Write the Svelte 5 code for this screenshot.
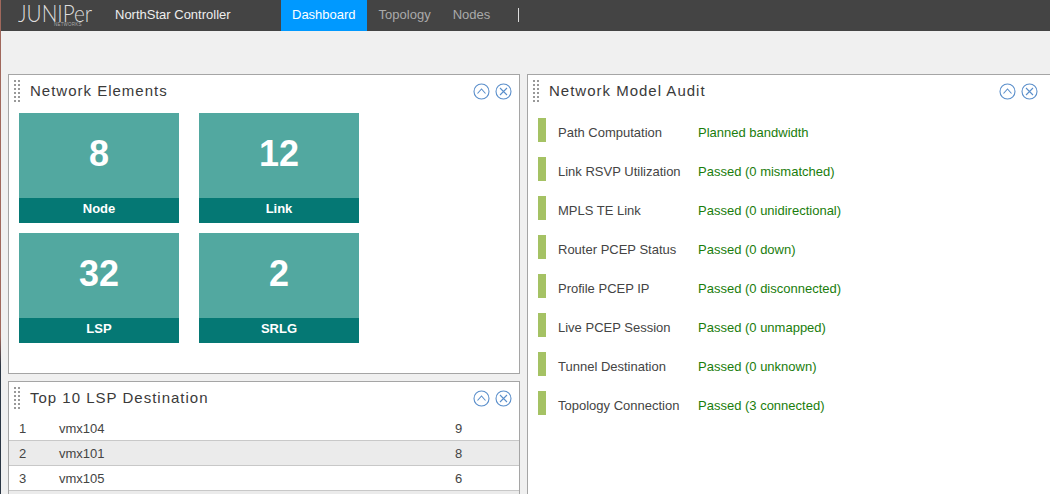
<script>
  const tiles = [
    { n: '8', label: 'Node' },
    { n: '12', label: 'Link' },
    { n: '32', label: 'LSP' },
    { n: '2', label: 'SRLG' }
  ];
  const audit = [
    ['Path Computation', 'Planned bandwidth'],
    ['Link RSVP Utilization', 'Passed (0 mismatched)'],
    ['MPLS TE Link', 'Passed (0 unidirectional)'],
    ['Router PCEP Status', 'Passed (0 down)'],
    ['Profile PCEP IP', 'Passed (0 disconnected)'],
    ['Live PCEP Session', 'Passed (0 unmapped)'],
    ['Tunnel Destination', 'Passed (0 unknown)'],
    ['Topology Connection', 'Passed (3 connected)']
  ];
  const rows = [
    ['1', 'vmx104', '9'],
    ['2', 'vmx101', '8'],
    ['3', 'vmx105', '6'],
    ['', '', '']
  ];
</script>

{#snippet head(title)}
  <div class="phead">
    <span class="grip">{#each Array(12) as _}<i></i>{/each}</span>
    <span class="ptitle">{title}</span>
    <span class="picons">
      <svg width="17" height="17" viewBox="0 0 17 17"><circle cx="8.5" cy="8.5" r="7.5" /><path d="M4.5 10.5 L8.5 6 L12.5 10.5" /></svg>
      <svg width="17" height="17" viewBox="0 0 17 17"><circle cx="8.5" cy="8.5" r="7.5" /><path d="M5 5 L12 12 M12 5 L5 12" /></svg>
    </span>
  </div>
{/snippet}

<div class="page">
  <header>
    <div class="logo"><span class="word">JUNIPer</span><span class="sub">NETWORKS</span></div>
    <div class="product">NorthStar Controller</div>
    <nav>
      <span class="tab active">Dashboard</span>
      <span class="tab">Topology</span>
      <span class="tab">Nodes</span>
      <span class="sep"></span>
    </nav>
  </header>
  <main>
    <div class="col">
      <section class="panel elements">
        {@render head('Network Elements')}
        <div class="tiles">
          {#each tiles as t}
            <div class="tile"><div class="num">{t.n}</div><div class="lab">{t.label}</div></div>
          {/each}
        </div>
      </section>
      <section class="panel top">
        {@render head('Top 10 LSP Destination')}
        <div class="table">
          {#each rows as r, i}
            <div class="row" class:alt={i % 2 === 1}><span class="c1">{r[0]}</span><span class="c2">{r[1]}</span><span class="c3">{r[2]}</span></div>
          {/each}
        </div>
      </section>
    </div>
    <section class="panel audit">
      {@render head('Network Model Audit')}
      <div class="list">
        {#each audit as a}
          <div class="item"><span class="bar"></span><span class="name">{a[0]}</span><span class="val">{a[1]}</span></div>
        {/each}
      </div>
    </section>
  </main>
</div>

<style>
  :global(body) { margin: 0; overflow: hidden; background: #f0f0f0; }
  .page {
    width: 1050px; height: 494px; overflow: hidden; background: #f0f0f0;
    font-family: "Liberation Sans", Arial, sans-serif; color: #333;
    border-left: 1px solid #a0685c; border-image: linear-gradient(#a0685c 68%, #2a3644 74%) 1; box-sizing: border-box;
  }
  header { height: 31px; background: #444; display: flex; align-items: stretch; color: #fff; margin-left: -1px; }
  .logo { width: 115px; position: relative; flex: none; }
  .word {
    position: absolute; left: 18px; top: 5px; font-family: Lato, sans-serif; font-weight: 300;
    font-size: 23px; line-height: 17px; color: #ddd; transform: scaleX(.9); transform-origin: left center;
  }
  .sub { position: absolute; left: 54px; top: 22px; font-size: 4.5px; line-height: 5px; color: #aaa; letter-spacing: .2px; }
  .product { width: 166px; flex: none; font-size: 13px; line-height: 29px; color: #eee; }
  nav { display: flex; align-items: stretch; }
  .tab { font-size: 13px; line-height: 29px; color: #aaa; padding: 0 11px; }
  .tab.active { background: #0099ff; color: #fff; margin-right: 1px; }
  .sep { width: 1px; height: 14px; background: #ddd; margin: 8px 0 0 17px; }
  main { display: flex; gap: 7px; padding: 43px 0 0 7px; }
  .col { width: 512px; flex: none; display: flex; flex-direction: column; gap: 7px; }
  .panel { background: #fff; border: 1px solid #a5a5a5; box-sizing: border-box; }
  .elements { height: 300px; }
  .top { height: 200px; }
  .audit { width: 540px; height: 460px; flex: none; }
  .phead { height: 31px; display: flex; align-items: center; position: relative; }
  .grip { width: 8px; margin-left: 5px; display: grid; grid-template-columns: 2px 2px; gap: 2px 2px; }
  .grip i { width: 2px; height: 2px; background: #999; display: block; }
  .ptitle { margin-left: 8px; font-size: 15px; letter-spacing: 1px; color: #3a3a3a; }
  .picons { position: absolute; left: 464px; top: 8px; display: flex; gap: 5px; }
  .audit .picons { left: 471px; }
  svg { display: block; fill: none; stroke: #5b8fcb; stroke-width: 1.1; }
  .tiles { display: grid; grid-template-columns: 160px 160px; grid-auto-rows: 110px; gap: 10px 20px; padding: 7px 0 0 10px; }
  .tile { background: #52a8a0; display: flex; flex-direction: column; color: #fff; }
  .num { height: 81px; padding-bottom: 4px; display: flex; align-items: center; justify-content: center; font-weight: 700; font-size: 36px; }
  .lab { height: 25px; background: #057874; font-weight: 700; font-size: 13px; line-height: 22px; text-align: center; }
  .table { margin-top: 3px; }
  .row { height: 25px; box-sizing: border-box; border-bottom: 1px solid #c8c8c8; display: flex; font-size: 13px; line-height: 26px; color: #444; }
  .row.alt { background: #ebebeb; }
  .c1 { width: 40px; margin-left: 10px; }
  .c2 { width: 396px; }
  .list { padding-top: 12px; }
  .item { height: 24px; margin: 0 0 15px 10px; display: flex; align-items: center; font-size: 13px; line-height: 16px; }
  .bar { width: 8px; height: 24px; background: #a5c264; }
  .name { width: 140px; margin-left: 12px; padding-top: 6px; color: #444; }
  .val { color: #1a7d0c; padding-top: 6px; }
</style>
